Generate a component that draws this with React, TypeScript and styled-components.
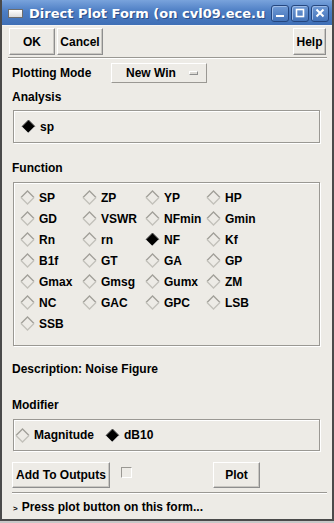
import React from "react";
import styled, { createGlobalStyle } from "styled-components";

const GlobalStyle = createGlobalStyle`
	html, body {
		margin: 0;
		padding: 0;
		background: #c8c8c8;
	}
	* {
		box-sizing: border-box;
	}
`;

const Window = styled.div`
	width: 334px;
	height: 521px;
	display: flex;
	flex-direction: column;
	background: #edebe6;
	border: 2px solid #4a4a4a;
	border-top: none;
	font-family: "Liberation Sans", Arial, sans-serif;
	font-size: 12px;
	font-weight: bold;
	color: #000;
	overflow: hidden;
`;

const TitleBar = styled.div`
	height: 26px;
	margin: 0 -2px;
	display: flex;
	align-items: center;
	padding: 1px 5px 0 8px;
	background: linear-gradient(#79a3dc, #4d7ec4 45%, #3f6fb6);
	border-bottom: 1px solid #f4f4f4;
	border-radius: 4px 4px 0 0;
`;

const TitleIcon = styled.span`
	width: 15px;
	height: 9px;
	margin-right: 6px;
	flex: none;
	background: linear-gradient(#ffffff, #dcdcdc);
	border: 1px solid #6d6d6d;
`;

const TitleText = styled.span`
	flex: 1;
	overflow: hidden;
	white-space: nowrap;
	font-family: "DejaVu Sans", sans-serif;
	font-size: 13px;
	font-weight: bold;
	color: #fff;
	text-shadow: 1px 1px 0 #2d4e86;
`;

const WinButtons = styled.div`
	display: flex;
	gap: 2px;
	margin-left: 4px;
`;

const WinButton = styled.span`
	width: 18px;
	height: 17px;
	display: flex;
	align-items: center;
	justify-content: center;
	border: 1px solid #24467f;
	border-radius: 3px;
	background: linear-gradient(#6f9ad6, #4473b9);
	box-shadow: inset 1px 1px 0 #9dbbe6;
`;

const Toolbar = styled.div`
	display: flex;
	gap: 2px;
	padding: 2px 6px 0 7px;
`;

const Spacer = styled.div`
	flex: 1;
`;

const Button = styled.button<{ $w: number; $h?: number; $mr?: number }>`
	width: ${(p) => p.$w}px;
	height: ${(p) => p.$h ?? 27}px;
	margin-right: ${(p) => p.$mr ?? 0}px;
	padding: 0;
	background: #edebe6;
	border: 1px solid;
	border-color: #ffffff #8e8e8e #8e8e8e #ffffff;
	box-shadow: inset -1px -1px 0 #c9c7c2;
	font: inherit;
	color: #000;
`;

const Separator = styled.div<{ $mt: number; $ml: number }>`
	height: 2px;
	margin: ${(p) => p.$mt}px 5px 0 ${(p) => p.$ml}px;
	border-top: 1px solid #9a9893;
	border-bottom: 1px solid #ffffff;
`;

const Form = styled.div`
	display: flex;
	flex-direction: column;
	padding: 0 12px 0 10px;
`;

const Row = styled.div<{ $mt: number }>`
	display: flex;
	align-items: center;
	margin-top: ${(p) => p.$mt}px;
`;

const Label = styled.div<{ $mt: number }>`
	height: 16px;
	line-height: 16px;
	margin-top: ${(p) => p.$mt}px;
`;

const ModeLabel = styled.span`
	width: 99px;
`;

const OptionButton = styled.div`
	width: 96px;
	height: 20px;
	display: flex;
	align-items: center;
	padding: 0 8px 0 14px;
	border: 1px solid;
	border-color: #ffffff #9a9893 #9a9893 #ffffff;
	span {
		flex: 1;
	}
`;

const OptionMark = styled.i`
	width: 9px;
	height: 4px;
	border: 1px solid;
	border-color: #ffffff #8e8e8e #8e8e8e #ffffff;
	background: #dcdad5;
`;

const Box = styled.div<{ $mt: number; $h: number; $pl: number }>`
	height: ${(p) => p.$h}px;
	margin: ${(p) => p.$mt}px 0 0 1px;
	padding-left: ${(p) => p.$pl}px;
	border: 1px solid #9a9893;
	box-shadow: 1px 1px 0 #ffffff, inset 1px 1px 0 #ffffff;
`;

const InlineChoices = styled.div`
	height: 100%;
	display: flex;
	align-items: center;
	gap: 11px;
`;

const Grid = styled.div`
	display: grid;
	grid-template-columns: 62px 63px 61px 1fr;
	grid-auto-rows: 21px;
	padding-top: 4px;
`;

const Choice = styled.div`
	display: flex;
	align-items: center;
	gap: 4px;
`;

const Check = styled.span`
	width: 11px;
	height: 11px;
	margin: 0 0 5px 11px;
	border: 1px solid;
	border-color: #9a9893 #ffffff #ffffff #9a9893;
	background: #edebe6;
`;

const Status = styled.div`
	height: 16px;
	line-height: 16px;
	margin: 5px 0 0 11px;
	small {
		font-size: 8px;
		margin-right: 4px;
	}
`;

const Diamond = ({ on }: { on?: boolean }) =>
	on ? (
		<svg width="15" height="15" viewBox="0 0 15 15">
			<polygon points="7.5,1 14,7.5 7.5,14 1,7.5" fill="#000" />
			<polyline points="1,7.5 7.5,1 14,7.5" fill="none" stroke="#555" strokeWidth="1" />
			<polyline points="14,7.5 7.5,14" fill="none" stroke="#fff" strokeWidth="1" />
		</svg>
	) : (
		<svg width="15" height="15" viewBox="0 0 15 15">
			<polyline points="1,7.5 7.5,1 14,7.5" fill="none" stroke="#a19f99" strokeWidth="1.3" />
			<polyline points="1,7.5 7.5,14 14,7.5" fill="none" stroke="#c2c0ba" strokeWidth="1.3" />
		</svg>
	);

const Radio = ({ label, on }: { label: string; on?: boolean }) => (
	<Choice>
		<Diamond on={on} />
		<span>{label}</span>
	</Choice>
);

const functions = [
	"SP", "ZP", "YP", "HP",
	"GD", "VSWR", "NFmin", "Gmin",
	"Rn", "rn", "NF", "Kf",
	"B1f", "GT", "GA", "GP",
	"Gmax", "Gmsg", "Gumx", "ZM",
	"NC", "GAC", "GPC", "LSB",
	"SSB",
];

const App = () => {
	return (
		<>
			<GlobalStyle />
			<Window>
				<TitleBar>
					<TitleIcon />
					<TitleText>Direct Plot Form (on cvl09.ece.u</TitleText>
					<WinButtons>
						<WinButton>
							<svg width="10" height="10" viewBox="0 0 10 10">
								<rect x="1" y="7" width="8" height="2" fill="#fff" />
							</svg>
						</WinButton>
						<WinButton>
							<svg width="10" height="10" viewBox="0 0 10 10">
								<rect x="1.5" y="1.5" width="7" height="7" fill="none" stroke="#fff" strokeWidth="1.6" />
							</svg>
						</WinButton>
						<WinButton>
							<svg width="10" height="10" viewBox="0 0 10 10">
								<path d="M1.5 1.5 L8.5 8.5 M8.5 1.5 L1.5 8.5" stroke="#fff" strokeWidth="2" />
							</svg>
						</WinButton>
					</WinButtons>
				</TitleBar>

				<Toolbar>
					<Button $w={46}>OK</Button>
					<Button $w={46}>Cancel</Button>
					<Spacer />
					<Button $w={33}>Help</Button>
				</Toolbar>
				<Separator $mt={2} $ml={6} />

				<Form>
					<Row $mt={4}>
						<ModeLabel>Plotting Mode</ModeLabel>
						<OptionButton>
							<span>New Win</span>
							<OptionMark />
						</OptionButton>
					</Row>

					<Label $mt={6}>Analysis</Label>
					<Box $mt={5} $h={33} $pl={7}>
						<InlineChoices>
							<Radio label="sp" on />
						</InlineChoices>
					</Box>

					<Label $mt={17}>Function</Label>
					<Box $mt={6} $h={164} $pl={6}>
						<Grid>
							{functions.map((f) => (
								<Radio key={f} label={f} on={f === "NF"} />
							))}
						</Grid>
					</Box>

					<Label $mt={15}>Description: Noise Figure</Label>
					<Label $mt={20}>Modifier</Label>
					<Box $mt={6} $h={32} $pl={1}>
						<InlineChoices>
							<Radio label="Magnitude" />
							<Radio label="dB10" on />
						</InlineChoices>
					</Box>

					<Row $mt={11}>
						<Button $w={98} $h={26}>Add To Outputs</Button>
						<Check />
						<Spacer />
						<Button $w={47} $h={26} $mr={60}>Plot</Button>
					</Row>
				</Form>

				<Separator $mt={4} $ml={10} />
				<Status>
					<small>&gt;</small>Press plot button on this form...
				</Status>
			</Window>
		</>
	);
};

export default App;
